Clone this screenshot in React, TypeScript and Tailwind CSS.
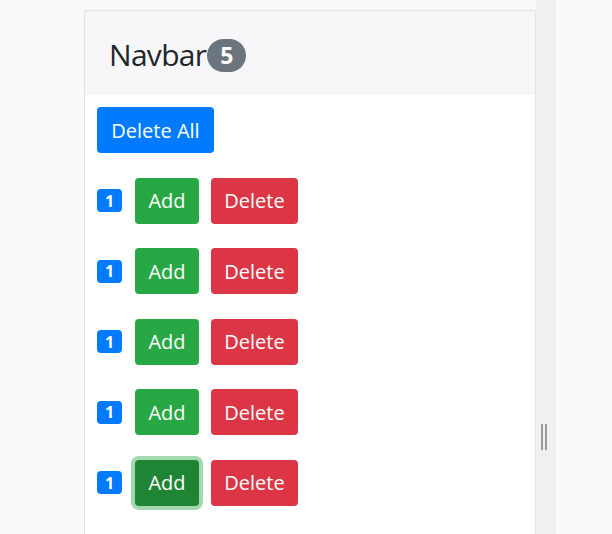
import React from "react";

const font = { fontFamily: '"Open Sans", "Noto Sans", Arial, sans-serif' };

function Row({ focused }: { focused?: boolean }) {
  return (
    <div className="flex items-center h-[46px]">
      <span className="w-[25px] h-[23px] rounded-[4px] bg-[#007bff] text-white text-[16px] font-bold flex items-center justify-center leading-none">
        1
      </span>
      <button
        className={
          "ml-[13px] h-[46px] w-[64px] rounded-[4px] text-white text-[20px] flex items-center justify-center pt-[1px] " +
          (focused
            ? "bg-[#1f8535] shadow-[0_0_0_4px_rgba(72,180,97,0.5)]"
            : "bg-[#28a745]")
        }
      >
        Add
      </button>
      <button className="ml-[12px] h-[46px] w-[87px] rounded-[4px] bg-[#dc3545] text-white text-[20px] flex items-center justify-center pt-[1px]">
        Delete
      </button>
    </div>
  );
}

export default function App() {
  return (
    <div className="h-[534px] w-[612px] overflow-hidden bg-[#fafafa] flex" style={font}>
      <div className="w-[84px] shrink-0" />
      <div className="w-[452px] shrink-0 mt-[10px] h-[600px] bg-white border border-[#e3e3e3]">
        <div className="h-[84px] bg-[#f7f7f9] flex items-center pl-[24px] pt-[4px]">
          <span className="text-[30px] tracking-[-0.7px] text-[#212529] leading-none">Navbar</span>
          <span className="ml-[1px] w-[39px] h-[33px] rounded-full bg-[#6c757d] text-white text-[23px] font-bold flex items-center justify-center leading-none">
            5
          </span>
        </div>
        <div className="px-[12px] pt-[12px] flex flex-col gap-[24.5px]">
          <div className="flex">
            <button className="h-[46px] w-[117px] rounded-[4px] bg-[#007bff] text-white text-[20px] flex items-center justify-center pt-[1px]">
              Delete All
            </button>
          </div>
          <Row />
          <Row />
          <Row />
          <Row />
          <Row focused />
        </div>
      </div>
      <div className="w-[20px] shrink-0 bg-[#f0f0f0] flex justify-center pt-[424px]">
        <div className="flex gap-[2px] h-[26px] ml-[-4px]">
          <div className="w-[2px] h-full bg-[#9a9a9a]" />
          <div className="w-[2px] h-full bg-[#9a9a9a]" />
        </div>
      </div>
      <div className="flex-1" />
    </div>
  );
}
